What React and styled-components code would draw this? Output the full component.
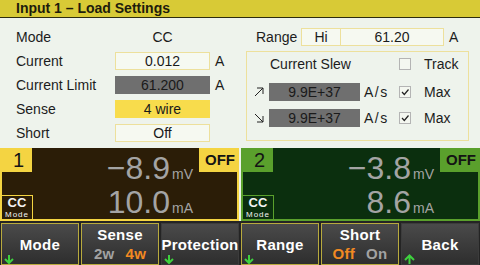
import React from 'react';
import styled, { createGlobalStyle } from 'styled-components';

const SANS = `"Liberation Sans", Arial, sans-serif`;

const Global = createGlobalStyle`
  html, body { margin: 0; padding: 0; background: #eef3ec; }
  #root { width: 480px; height: 265px; overflow: hidden; }
  * { box-sizing: border-box; }
`;

const Screen = styled.div`
  width: 480px;
  height: 265px;
  display: flex;
  flex-direction: column;
  background: #eef3ec;
  overflow: hidden;
  font-family: ${SANS};
  color: #1c1c1c;
`;

const TitleBar = styled.div`
  height: 18px;
  flex: none;
  background: #d8ca36;
  border-bottom: 1px solid #2e2c10;
  padding-left: 16px;
  font: bold 14px/17px ${SANS};
  color: #1e1c0c;
`;

const Settings = styled.div`
  height: 130px;
  flex: none;
  padding: 10px 10px 0 16px;
  display: flex;
  gap: 16px;
`;

const FieldGrid = styled.div`
  display: grid;
  grid-template-columns: 99px 95px 20px;
  grid-auto-rows: 18px;
  row-gap: 6px;
  align-items: center;
  font-size: 14px;
`;

const Label = styled.div`
  line-height: 18px;
  white-space: nowrap;
`;

const boxBg = { gray: '#6f6f6f', yellow: '#f8dc4c', plain: '#f6f9f1', none: 'transparent' };
const boxBorder = { gray: '#6f6f6f', yellow: '#f8dc4c', plain: '#ede09c', none: 'transparent' };

const ValueBox = styled.div`
  height: 18px;
  display: flex;
  align-items: center;
  justify-content: center;
  background: ${p => boxBg[p.$variant || 'plain']};
  border: 1px solid ${p => boxBorder[p.$variant || 'plain']};
  font-size: 14px;
  color: #1a1a1a;
  white-space: nowrap;
`;

const Unit = styled.div`
  padding-left: 5px;
  font-size: 14px;
`;

const RightCol = styled.div`
  width: 223px;
  display: flex;
  flex-direction: column;
  gap: 5px;
`;

const RangeRow = styled.div`
  height: 18px;
  display: flex;
  align-items: center;
  font-size: 14px;
`;

const RangeLabel = styled.div`
  width: 55px;
  padding-left: 10px;
`;

const RangeBox = styled.div`
  width: 143px;
  height: 18px;
  display: flex;
  border: 1px solid #ede09c;
  background: #f6f9f1;
`;

const RangeSeg = styled.div`
  width: ${p => p.$w || 'auto'};
  flex: ${p => (p.$w ? 'none' : '1')};
  display: flex;
  align-items: center;
  justify-content: center;
  border-right: ${p => (p.$divider ? '1px solid #ede09c' : 'none')};
`;

const SlewBox = styled.div`
  height: 90px;
  border: 1px solid #ede09c;
  display: grid;
  grid-template-columns: 22px 91px 39px 12px 1fr;
  grid-template-rows: 23px 19px 19px;
  row-gap: 7px;
  align-items: center;
  font-size: 14px;
`;

const SlewTitle = styled.div`
  grid-column: 2 / 4;
  padding-left: 1px;
  padding-top: 1px;
`;

const ArrowCell = styled.div`
  display: flex;
  align-items: center;
  padding-left: 7px;
`;

const Check = styled.div`
  width: 12px;
  height: 12px;
  border: 1px solid #b4b4b4;
  background: #f4f7f0;
  display: flex;
  align-items: center;
  justify-content: center;
`;

const CheckText = styled.div`
  padding-left: 13px;
`;

const SlewUnit = styled.div`
  padding-left: 4px;
  letter-spacing: 1.5px;
`;

const Channels = styled.div`
  height: 73px;
  flex: none;
  display: flex;
  gap: 2px;
`;

const Panel = styled.div`
  flex: 1;
  display: grid;
  grid-template-columns: 30px 1fr 38px;
  grid-template-rows: 24px 1fr 24px;
  background: ${p => p.$dark};
  border: 2px solid ${p => p.$accent};
  border-top: none;
`;

const NumTab = styled.div`
  grid-area: 1 / 1;
  background: ${p => p.$accent};
  margin-left: -2px;
  font: 20px/24px ${SANS};
  color: #141414;
  padding-left: 13px;
`;

const StateTab = styled.div`
  grid-area: 1 / 3;
  background: ${p => p.$accent};
  margin-right: -2px;
  font: bold 15px/24px ${SANS};
  color: #141414;
  text-align: center;
  padding-left: 2px;
`;

const Readings = styled.div`
  grid-column: 2;
  grid-row: 1 / 4;
  display: flex;
  flex-direction: column;
  align-items: flex-end;
  padding-right: 5px;
  padding-top: 3px;
  color: #a4a4a4;
`;

const Reading = styled.div`
  display: flex;
  align-items: baseline;
  height: 34px;
`;

const ReadingValue = styled.span`
  font: 32px/34px ${SANS};
`;

const ReadingUnit = styled.span`
  font: 14px ${SANS};
  width: 24px;
  padding-left: 2px;
`;

const ModeBox = styled.div`
  grid-area: 3 / 1;
  border: 1px solid ${p => p.$accent};
  border-left: none;
  border-bottom: none;
  margin-right: -1px;
  display: flex;
  flex-direction: column;
  align-items: center;
  color: #f4f4f4;
`;

const ModeCC = styled.div`
  font: bold 13px/14px ${SANS};
`;

const ModeSmall = styled.div`
  font: 8px/8px ${SANS};
  margin-top: 1px;
  letter-spacing: 1px;
`;

const SoftKeys = styled.div`
  flex: 1;
  display: grid;
  grid-template-columns: repeat(6, 78px);
  column-gap: 2px;
  padding: 2px 1px 0 1px;
  background: #242424;
`;

const SoftKey = styled.div`
  position: relative;
  border: 1px solid ${p => (p.$framed ? '#b8aa3e' : '#3c3c3c')};
  background: linear-gradient(#4a4a4a, #2e2e2e);
  display: flex;
  flex-direction: column;
  align-items: center;
  justify-content: center;
  color: #ffffff;
  font: bold 15px/17px ${SANS};
  letter-spacing: 0.3px;
`;

const Options = styled.div`
  display: flex;
  gap: 11px;
  margin-top: 2px;
`;

const Opt = styled.span`
  color: ${p => (p.$on ? '#f28a22' : '#a2a2a2')};
`;

const KeyArrow = styled.svg`
  position: absolute;
  left: ${p => p.$left || 2}px;
  bottom: 0;
`;

const DownArrow = () => (
  <KeyArrow width="10" height="9" viewBox="0 0 10 9">
    <path d="M5 0 V8 M1 4 L5 8 L9 4" stroke="#3ed23e" strokeWidth="2" fill="none" />
  </KeyArrow>
);

const UpArrow = () => (
  <KeyArrow width="11" height="10" viewBox="0 0 11 10">
    <path d="M5.5 10 V1.5 M1 6 L5.5 1.5 L10 6" stroke="#3ed23e" strokeWidth="2" fill="none" />
  </KeyArrow>
);

const RiseIcon = () => (
  <svg width="10" height="10" viewBox="0 0 10 10">
    <path d="M1 9 L9 1 M3 1 H9 V7" stroke="#222" strokeWidth="1" fill="none" />
  </svg>
);

const FallIcon = () => (
  <svg width="10" height="10" viewBox="0 0 10 10">
    <path d="M1 1 L9 9 M3 9 H9 V3" stroke="#222" strokeWidth="1" fill="none" />
  </svg>
);

const Tick = () => (
  <svg width="10" height="10" viewBox="0 0 10 10">
    <path d="M2 5 L4.3 7.5 L8.5 2.5" stroke="#222" strokeWidth="1.2" fill="none" />
  </svg>
);

const fields = [
  { label: 'Mode', value: 'CC', variant: 'none' },
  { label: 'Current', value: '0.012', variant: 'plain', unit: 'A' },
  { label: 'Current Limit', value: '61.200', variant: 'gray', unit: 'A' },
  { label: 'Sense', value: '4 wire', variant: 'yellow' },
  { label: 'Short', value: 'Off', variant: 'plain' },
];

const channels = [
  { n: '1', accent: '#f4d442', dark: '#2b1d07', v: '−8.9', i: '10.0' },
  { n: '2', accent: '#5aa02c', dark: '#0b2f0e', v: '−3.8', i: '8.6' },
];

export default function App() {
  return (
    <>
      <Global />
      <Screen>
        <TitleBar>Input 1 – Load Settings</TitleBar>
        <Settings>
          <FieldGrid>
            {fields.map(f => (
              <React.Fragment key={f.label}>
                <Label>{f.label}</Label>
                <ValueBox $variant={f.variant}>{f.value}</ValueBox>
                <Unit>{f.unit || ''}</Unit>
              </React.Fragment>
            ))}
          </FieldGrid>
          <RightCol>
            <RangeRow>
              <RangeLabel>Range</RangeLabel>
              <RangeBox>
                <RangeSeg $w="39px" $divider>Hi</RangeSeg>
                <RangeSeg>61.20</RangeSeg>
              </RangeBox>
              <Unit>A</Unit>
            </RangeRow>
            <SlewBox>
              <div />
              <SlewTitle>Current Slew</SlewTitle>
              <Check />
              <CheckText>Track</CheckText>

              <ArrowCell><RiseIcon /></ArrowCell>
              <ValueBox $variant="gray">9.9E+37</ValueBox>
              <SlewUnit>A/s</SlewUnit>
              <Check><Tick /></Check>
              <CheckText>Max</CheckText>

              <ArrowCell><FallIcon /></ArrowCell>
              <ValueBox $variant="gray">9.9E+37</ValueBox>
              <SlewUnit>A/s</SlewUnit>
              <Check><Tick /></Check>
              <CheckText>Max</CheckText>
            </SlewBox>
          </RightCol>
        </Settings>
        <Channels>
          {channels.map(c => (
            <Panel key={c.n} $accent={c.accent} $dark={c.dark}>
              <NumTab $accent={c.accent}>{c.n}</NumTab>
              <StateTab $accent={c.accent}>OFF</StateTab>
              <Readings>
                <Reading>
                  <ReadingValue>{c.v}</ReadingValue>
                  <ReadingUnit>mV</ReadingUnit>
                </Reading>
                <Reading>
                  <ReadingValue>{c.i}</ReadingValue>
                  <ReadingUnit>mA</ReadingUnit>
                </Reading>
              </Readings>
              <ModeBox $accent={c.accent}>
                <ModeCC>CC</ModeCC>
                <ModeSmall>Mode</ModeSmall>
              </ModeBox>
            </Panel>
          ))}
        </Channels>
        <SoftKeys>
          <SoftKey $framed>Mode<DownArrow /></SoftKey>
          <SoftKey $framed>
            Sense
            <Options><Opt>2w</Opt><Opt $on>4w</Opt></Options>
          </SoftKey>
          <SoftKey>Protection<DownArrow /></SoftKey>
          <SoftKey $framed>Range<DownArrow /></SoftKey>
          <SoftKey $framed>
            Short
            <Options><Opt $on>Off</Opt><Opt>On</Opt></Options>
          </SoftKey>
          <SoftKey>Back<UpArrow /></SoftKey>
        </SoftKeys>
      </Screen>
    </>
  );
}
